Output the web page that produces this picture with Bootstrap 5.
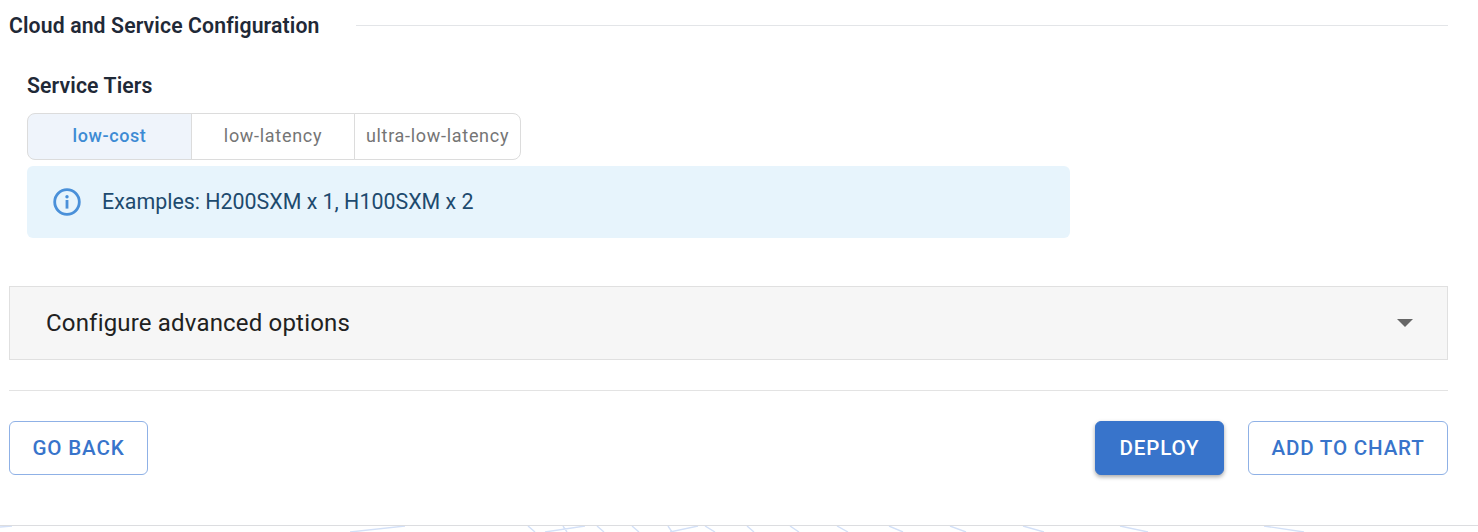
<!-- Bootstrap 5 CDN -->
<link href="https://cdn.jsdelivr.net/npm/bootstrap@5.3.3/dist/css/bootstrap.min.css" rel="stylesheet">
<script src="https://cdn.jsdelivr.net/npm/bootstrap@5.3.3/dist/js/bootstrap.bundle.min.js"></script>

<style>
  html, body {
    height: 532px;
    overflow: hidden;
  }

  body {
    background: #fff;
    font-family: Roboto, "Liberation Sans", sans-serif;
    color: #1f2937;
  }

  .page-wrap {
    padding: 16px 30px 0 9px;
    height: 525px;
  }

  .section-head {
    height: 20px;
  }

  .section-title {
    font-size: 21.2px;
    font-weight: 600;
    letter-spacing: 0.13px;
    line-height: 20px;
    color: #1f2937;
    margin: 0;
    white-space: nowrap;
  }

  .section-rule {
    height: 1px;
    background: #e3e5e8;
    margin-left: 37px;
    margin-top: -1px;
  }

  .tier-block {
    padding: 40px 0 0 18px;
  }

  .tier-label {
    font-size: 21.2px;
    font-weight: 600;
    letter-spacing: 0.13px;
    line-height: 20px;
    margin: 0 0 17px;
  }

  .tier-group {
    width: 494px;
    height: 47px;
  }

  .tier-group .btn {
    font-size: 18px;
    letter-spacing: 0.7px;
    font-weight: 400;
    color: #757575;
    background: #fff;
    border-color: #dcdcdc;
    padding: 0 0 2px;
    border-radius: 8px;
    flex: none;
  }

  .tier-group .btn.tier-on {
    color: #3d8bd4;
    background: #eff4fb;
    font-weight: 500;
    letter-spacing: 0.6px;
  }

  .tier-a { width: 165px; }
  .tier-b { width: 164px; }
  .tier-c { width: 167px; }

  .tier-note {
    width: 1043px;
    height: 72px;
    margin: 6px 0 0;
    padding: 0 0 0 25px;
    background: #e7f4fc;
    border: 0;
    border-radius: 6px;
    color: #1d4a6e;
    font-size: 21.4px;
    gap: 20px;
  }

  .advanced-box {
    height: 74px;
    margin-top: 48px;
    padding: 0 34px 0 36px;
    background: #f6f6f6;
    border: 1px solid #e0e0e0;
    font-size: 24px;
    color: #212121;
    letter-spacing: 0.18px;
  }

  .advanced-caret {
    width: 0;
    height: 0;
    border-left: 8px solid transparent;
    border-right: 8px solid transparent;
    border-top: 8px solid #666;
  }

  .foot-rule {
    height: 1px;
    background: #e3e3e3;
    margin: 30px 0;
  }

  .action-btn {
    height: 54px;
    font-size: 20.6px;
    font-weight: 500;
    letter-spacing: 0.8px;
    padding: 0;
    border-radius: 6px;
    border: 1px solid #8fb1e6;
    color: #3874cb;
    background: #fff;
  }

  .action-back { width: 139px; }
  .action-add { width: 200px; }

  .action-solid {
    width: 129px;
    border-color: #3874cb;
    background: #3874cb;
    color: #fff;
    box-shadow: 0 2px 4px rgba(0, 0, 0, 0.35);
  }

  .bottom-art {
    display: block;
    width: 1478px;
    height: 7px;
    border-top: 1px solid #dcdde0;
  }
</style>

<div class="page-wrap">
  <div class="section-head d-flex align-items-center">
    <h2 class="section-title">Cloud and Service Configuration</h2>
    <div class="section-rule flex-grow-1"></div>
  </div>

  <div class="tier-block">
    <h3 class="tier-label">Service Tiers</h3>
    <div class="btn-group tier-group" role="group">
      <button type="button" class="btn tier-a tier-on">low-cost</button>
      <button type="button" class="btn tier-b">low-latency</button>
      <button type="button" class="btn tier-c">ultra-low-latency</button>
    </div>
    <div class="alert tier-note d-flex align-items-center" role="alert">
      <svg width="30" height="30" viewBox="0 0 30 30" fill="none">
        <circle cx="15" cy="15" r="12.3" stroke="#4a90d9" stroke-width="2.8"/>
        <circle cx="15" cy="9.8" r="1.7" fill="#4a90d9"/>
        <rect x="13.6" y="13" width="2.8" height="8.6" fill="#4a90d9"/>
      </svg>
      <span>Examples: H200SXM x 1, H100SXM x 2</span>
    </div>
  </div>

  <div class="advanced-box d-flex align-items-center justify-content-between">
    <span>Configure advanced options</span>
    <span class="advanced-caret"></span>
  </div>

  <div class="foot-rule"></div>

  <div class="d-flex align-items-center">
    <button type="button" class="btn action-btn action-back">GO BACK</button>
    <button type="button" class="btn action-btn action-solid ms-auto">DEPLOY</button>
    <button type="button" class="btn action-btn action-add ms-4">ADD TO CHART</button>
  </div>
</div>

<svg class="bottom-art" viewBox="0 0 1478 6" fill="none" stroke="#d3e0f7" stroke-width="1.4">
  <path d="M0 1 L12 0M350 6 L405 0M528 0 L535 6M545 6 L585 0M563 0 L567 6M597 0 L604 6M632 0 L639 6M668 0 L672 6M670 6 L698 0M705 0 L715 6"/>
  <path d="M747 0 L754 6M790 0 L799 6M837 0 L848 6M889 0 L903 6M950 0 L966 6M1023 0 L1044 6M1120 0 L1148 6M1264 0 L1304 6"/>
</svg>
